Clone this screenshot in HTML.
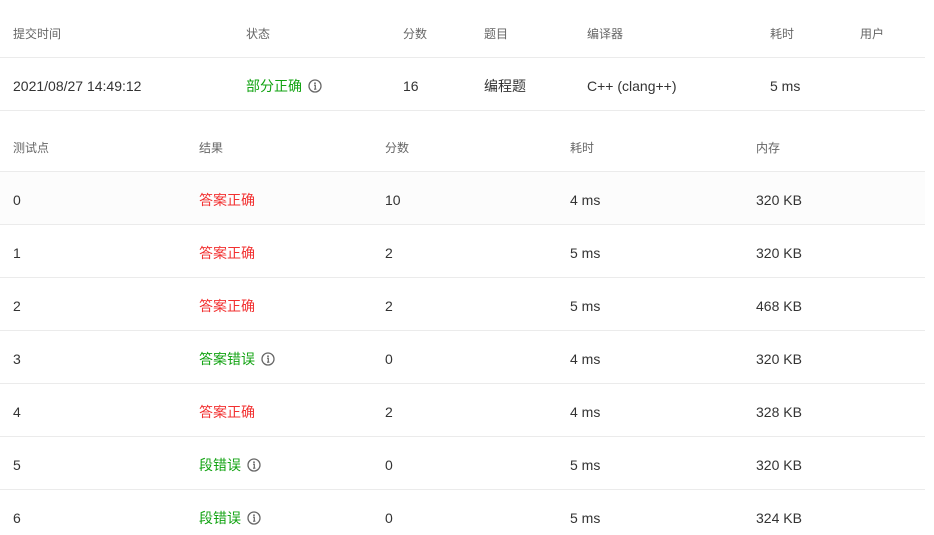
<!DOCTYPE html>
<html><head><meta charset="utf-8">
<style>
*{margin:0;padding:0;box-sizing:border-box}
body{width:934px;height:535px;background:#fff;font-family:"Liberation Sans","Noto Sans CJK SC",sans-serif;position:relative;overflow:hidden}
.t{position:absolute;white-space:nowrap;line-height:16px;transform:translateY(-7px)}
.h{font-size:12px;color:#666}
.d{font-size:14px;color:#333}
.g{color:#12a312;font-size:14px}
.r{color:#f23030;font-size:14px}
.line{position:absolute;left:0;width:925px;height:1px;background:#ebebeb}
.bg{position:absolute;left:0;width:925px;background:#fcfcfc}
svg.i{vertical-align:-2px;margin-left:6px}
</style></head><body>
<div class="bg" style="top:172px;height:52px"></div>
<div class="line" style="top:57px"></div>
<div class="line" style="top:110px"></div>
<div class="line" style="top:171px"></div>
<div class="line" style="top:224px"></div>
<div class="line" style="top:277px"></div>
<div class="line" style="top:330px"></div>
<div class="line" style="top:383px"></div>
<div class="line" style="top:436px"></div>
<div class="line" style="top:489px"></div>

<div class="t h" style="left:13px;top:33px">提交时间</div>
<div class="t h" style="left:246px;top:33px">状态</div>
<div class="t h" style="left:403px;top:33px">分数</div>
<div class="t h" style="left:484px;top:33px">题目</div>
<div class="t h" style="left:587px;top:33px">编译器</div>
<div class="t h" style="left:770px;top:33px">耗时</div>
<div class="t h" style="left:860px;top:33px">用户</div>

<div class="t d" style="left:13px;top:85px">2021/08/27 14:49:12</div>
<div class="t g" style="left:246px;top:85px">部分正确<svg class="i" width="14" height="14" viewBox="0 0 14 14"><circle cx="7" cy="7" r="6" fill="none" stroke="#666" stroke-width="1.3"/><circle cx="7" cy="4.2" r="0.9" fill="#666"/><path d="M6 6.2h1.3v4M6 10.2h2.4" stroke="#666" stroke-width="1.2" fill="none"/></svg></div>
<div class="t d" style="left:403px;top:85px">16</div>
<div class="t d" style="left:484px;top:85px">编程题</div>
<div class="t d" style="left:587px;top:85px">C++ (clang++)</div>
<div class="t d" style="left:770px;top:85px">5 ms</div>

<div class="t h" style="left:13px;top:147px">测试点</div>
<div class="t h" style="left:199px;top:147px">结果</div>
<div class="t h" style="left:385px;top:147px">分数</div>
<div class="t h" style="left:570px;top:147px">耗时</div>
<div class="t h" style="left:756px;top:147px">内存</div>

<div class="t d" style="left:13px;top:199px">0</div><div class="t r" style="left:199px;top:199px">答案正确</div><div class="t d" style="left:385px;top:199px">10</div><div class="t d" style="left:570px;top:199px">4 ms</div><div class="t d" style="left:756px;top:199px">320 KB</div>
<div class="t d" style="left:13px;top:252px">1</div><div class="t r" style="left:199px;top:252px">答案正确</div><div class="t d" style="left:385px;top:252px">2</div><div class="t d" style="left:570px;top:252px">5 ms</div><div class="t d" style="left:756px;top:252px">320 KB</div>
<div class="t d" style="left:13px;top:305px">2</div><div class="t r" style="left:199px;top:305px">答案正确</div><div class="t d" style="left:385px;top:305px">2</div><div class="t d" style="left:570px;top:305px">5 ms</div><div class="t d" style="left:756px;top:305px">468 KB</div>
<div class="t d" style="left:13px;top:358px">3</div><div class="t g" style="left:199px;top:358px">答案错误<svg class="i" width="14" height="14" viewBox="0 0 14 14"><circle cx="7" cy="7" r="6" fill="none" stroke="#666" stroke-width="1.3"/><circle cx="7" cy="4.2" r="0.9" fill="#666"/><path d="M6 6.2h1.3v4M6 10.2h2.4" stroke="#666" stroke-width="1.2" fill="none"/></svg></div><div class="t d" style="left:385px;top:358px">0</div><div class="t d" style="left:570px;top:358px">4 ms</div><div class="t d" style="left:756px;top:358px">320 KB</div>
<div class="t d" style="left:13px;top:411px">4</div><div class="t r" style="left:199px;top:411px">答案正确</div><div class="t d" style="left:385px;top:411px">2</div><div class="t d" style="left:570px;top:411px">4 ms</div><div class="t d" style="left:756px;top:411px">328 KB</div>
<div class="t d" style="left:13px;top:464px">5</div><div class="t g" style="left:199px;top:464px">段错误<svg class="i" width="14" height="14" viewBox="0 0 14 14"><circle cx="7" cy="7" r="6" fill="none" stroke="#666" stroke-width="1.3"/><circle cx="7" cy="4.2" r="0.9" fill="#666"/><path d="M6 6.2h1.3v4M6 10.2h2.4" stroke="#666" stroke-width="1.2" fill="none"/></svg></div><div class="t d" style="left:385px;top:464px">0</div><div class="t d" style="left:570px;top:464px">5 ms</div><div class="t d" style="left:756px;top:464px">320 KB</div>
<div class="t d" style="left:13px;top:517px">6</div><div class="t g" style="left:199px;top:517px">段错误<svg class="i" width="14" height="14" viewBox="0 0 14 14"><circle cx="7" cy="7" r="6" fill="none" stroke="#666" stroke-width="1.3"/><circle cx="7" cy="4.2" r="0.9" fill="#666"/><path d="M6 6.2h1.3v4M6 10.2h2.4" stroke="#666" stroke-width="1.2" fill="none"/></svg></div><div class="t d" style="left:385px;top:517px">0</div><div class="t d" style="left:570px;top:517px">5 ms</div><div class="t d" style="left:756px;top:517px">324 KB</div>
</body></html>
